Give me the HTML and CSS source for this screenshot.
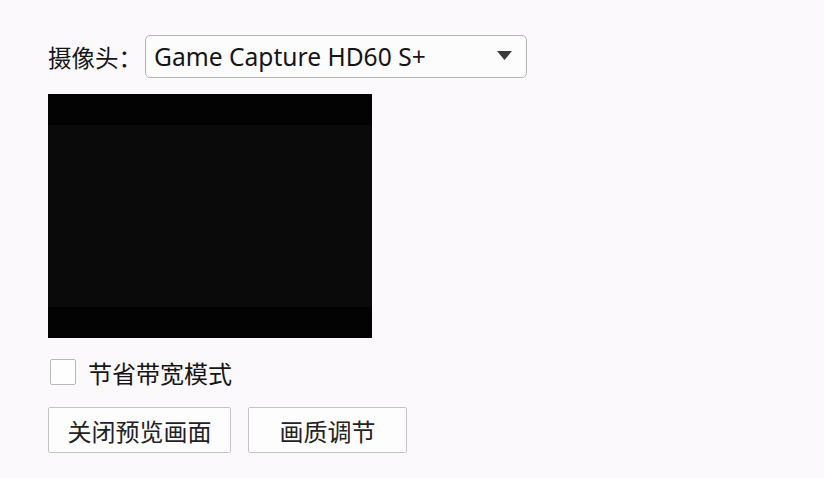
FILE: index.html
```html
<!DOCTYPE html>
<html lang="zh-CN">
<head>
<meta charset="utf-8">
<title>摄像头</title>
<link rel="stylesheet" href="styles.css">
</head>
<body>
<div class="panel">
  <div class="row-camera">
    <span class="label">摄像头：</span>
    <div class="select">
      <span class="select-text">Game Capture HD60 S+</span>
      <svg class="arrow" width="15" height="9" viewBox="0 0 15 9"><path d="M0 0 H15 L7.5 9 Z" fill="#3a3a3a"/></svg>
    </div>
  </div>
  <div class="preview"><div class="preview-inner"></div></div>
  <label class="check-row">
    <span class="checkbox"></span>
    <span class="check-label">节省带宽模式</span>
  </label>
  <div class="buttons">
    <button class="btn btn-wide">关闭预览画面</button>
    <button class="btn btn-narrow">画质调节</button>
  </div>
</div>
</body>
</html>
```
FILE: styles.css
```css
html, body {
  margin: 0;
  padding: 0;
  background: #fbf9fb;
}
body {
  font-family: "Noto Sans", "Noto Sans CJK SC", sans-serif;
  color: #111;
}
.panel {
  padding: 35px 0 0 48px;
  display: flex;
  flex-direction: column;
  align-items: flex-start;
}
.row-camera {
  display: flex;
  align-items: center;
  height: 43px;
}
.label {
  font-family: "Noto Sans CJK SC", sans-serif;
  font-size: 23.5px;
  width: 97px;
  color: #151515;
}
.select {
  box-sizing: border-box;
  width: 382px;
  height: 43px;
  border: 1px solid #b4b4b4;
  border-radius: 5px;
  background: #fdfcfd;
  display: flex;
  align-items: center;
  justify-content: space-between;
  padding: 0 14px 0 8px;
}
.select-text {
  font-family: "Noto Sans", sans-serif;
  font-size: 24.6px;
  color: #151515;
  margin-top: -1px;
}
.arrow {
  display: block;
  margin-top: -3px;
}
.preview {
  margin-top: 16px;
  width: 324px;
  height: 244px;
  background: #030303;
  display: flex;
  align-items: center;
}
.preview-inner {
  width: 100%;
  height: 182px;
  background: #0b0a0b;
}
.check-row {
  margin-top: 21px;
  margin-left: 2px;
  display: flex;
  align-items: center;
  height: 26px;
}
.checkbox {
  box-sizing: border-box;
  width: 26px;
  height: 26px;
  border: 1px solid #b8b8b8;
  border-radius: 2px;
  background: #fefefe;
}
.check-label {
  font-family: "Noto Sans CJK SC", sans-serif;
  font-size: 24px;
  margin-left: 12px;
  color: #151515;
}
.buttons {
  margin-top: 22px;
  display: flex;
  gap: 17px;
}
.btn {
  box-sizing: border-box;
  height: 46px;
  border: 1px solid #c4c4c4;
  border-radius: 2px;
  background: #fdfdfd;
  font-family: "Noto Sans CJK SC", sans-serif;
  font-size: 24px;
  color: #222;
  padding: 0;
  display: flex;
  align-items: center;
  justify-content: center;
}
.btn-wide { width: 183px; }
.btn-narrow { width: 159px; }
```
